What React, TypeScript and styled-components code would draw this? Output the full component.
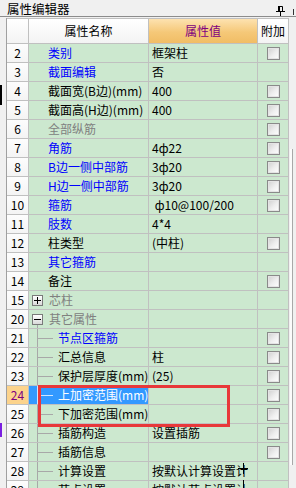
import * as React from "react";
import styled, { createGlobalStyle, css } from "styled-components";

const GlobalStyle = createGlobalStyle`
  html, body {
    margin: 0;
    padding: 0;
    background: #f0f0f0;
  }
  body {
    font-family: "Noto Sans CJK SC", "Liberation Sans", sans-serif;
    font-size: 12px;
    color: #000;
  }
  * {
    box-sizing: border-box;
  }
`;

type Tone = "blue" | "black" | "grey";
type Kind = "plain" | "collapsed" | "expanded" | "child";

interface IRow {
  n: number;
  name: string;
  value?: string;
  tone: Tone;
  kind: Kind;
  check: boolean;
  selected?: boolean;
}

const rows: IRow[] = [
  { n: 2, name: "类别", value: "框架柱", tone: "blue", kind: "plain", check: true },
  { n: 3, name: "截面编辑", value: "否", tone: "blue", kind: "plain", check: false },
  { n: 4, name: "截面宽(B边)(mm)", value: "400", tone: "black", kind: "plain", check: true },
  { n: 5, name: "截面高(H边)(mm)", value: "400", tone: "black", kind: "plain", check: true },
  { n: 6, name: "全部纵筋", tone: "grey", kind: "plain", check: true },
  { n: 7, name: "角筋", value: "4ф22", tone: "blue", kind: "plain", check: true },
  { n: 8, name: "B边一侧中部筋", value: "3ф20", tone: "blue", kind: "plain", check: true },
  { n: 9, name: "H边一侧中部筋", value: "3ф20", tone: "blue", kind: "plain", check: true },
  { n: 10, name: "箍筋", value: " ф10@100/200", tone: "blue", kind: "plain", check: true },
  { n: 11, name: "肢数", value: "4*4", tone: "blue", kind: "plain", check: false },
  { n: 12, name: "柱类型", value: "(中柱)", tone: "black", kind: "plain", check: true },
  { n: 13, name: "其它箍筋", tone: "blue", kind: "plain", check: false },
  { n: 14, name: "备注", tone: "black", kind: "plain", check: true },
  { n: 15, name: "芯柱", tone: "grey", kind: "collapsed", check: false },
  { n: 20, name: "其它属性", tone: "grey", kind: "expanded", check: false },
  { n: 21, name: "节点区箍筋", tone: "blue", kind: "child", check: true },
  { n: 22, name: "汇总信息", value: "柱", tone: "black", kind: "child", check: true },
  { n: 23, name: "保护层厚度(mm)", value: "(25)", tone: "black", kind: "child", check: true },
  { n: 24, name: "上加密范围(mm)", tone: "black", kind: "child", check: true, selected: true },
  { n: 25, name: "下加密范围(mm)", tone: "black", kind: "child", check: true },
  { n: 26, name: "插筋构造", value: "设置插筋", tone: "black", kind: "child", check: true },
  { n: 27, name: "插筋信息", tone: "black", kind: "child", check: true },
  { n: 28, name: "计算设置", value: "按默认计算设置计", tone: "black", kind: "child", check: false },
  { n: 29, name: "节点设置", value: "按默认节点设置计", tone: "black", kind: "child", check: false }
];

const toneColors: Record<Tone, string> = {
  blue: "#0000ff",
  black: "#000000",
  grey: "#808080"
};

const GRID = "#c0c0c0";
const GREEN = "#cce8cf";

const SPanel = styled.div`
  position: relative;
  width: 296px;
  height: 488px;
  overflow: hidden;
  background: #f0f0f0;
  display: flex;
  flex-direction: column;
`;

const STitleBar = styled.div`
  flex: none;
  height: 17px;
  padding: 2px 0 0 7px;
  border-bottom: 1px solid #8c8c8c;
  display: flex;
  align-items: center;
  font-size: 12.5px;
  line-height: 14px;
`;

const STitle = styled.span`
  flex: 1;
`;

const SPin = styled.svg`
  flex: none;
  margin-top: 3px;
  margin-right: 8px;
`;

const SEdgeGlyph = styled.span`
  flex: none;
  width: 1px;
  height: 6px;
  margin-top: 5px;
  margin-right: 2px;
  background: #333;
`;

const SBody = styled.div`
  flex: 1;
  display: flex;
  margin-top: 1px;
  min-height: 0;
`;

const SGutter = styled.div`
  flex: none;
  width: 7px;
  border-right: 1px solid #a0a0a0;
  display: flex;
  flex-direction: column;
`;

const SGutterMark = styled.span<{ $gap: number; $height: number; $color: string }>`
  width: 2px;
  margin-top: ${({ $gap }) => $gap}px;
  height: ${({ $height }) => $height}px;
  background: ${({ $color }) => $color};
`;

const STable = styled.div`
  flex: none;
  width: 282px;
  border-top: 1px solid ${GRID};
  display: flex;
  flex-direction: column;
`;

const SRow = styled.div<{ $header?: boolean }>`
  flex: none;
  display: grid;
  grid-template-columns: 22px 120px 109px 31px;
  height: ${({ $header }) => ($header ? 25 : 19)}px;
`;

const cellBase = css`
  border-right: 1px solid ${GRID};
  border-bottom: 1px solid ${GRID};
  display: flex;
  align-items: center;
  overflow: hidden;
  white-space: nowrap;
  line-height: 14px;
`;

const SHeadCell = styled.div<{ $accent?: boolean }>`
  ${cellBase};
  justify-content: center;
  color: ${({ $accent }) => ($accent ? "#800080" : "#000")};
  background: ${({ $accent }) =>
    $accent
      ? "linear-gradient(#fde2b0, #f5c878 55%, #f1bd65)"
      : "linear-gradient(#ffffff, #f3f3f3)"};
`;

const SNumCell = styled.div<{ $selected?: boolean }>`
  ${cellBase};
  justify-content: center;
  color: ${({ $selected }) => ($selected ? "#800080" : "#000")};
  background: ${({ $selected }) =>
    $selected ? "#fcd38c" : "linear-gradient(#fdfdfd, #f4f4f4)"};
`;

const SNameCell = styled.div<{ $tone: Tone; $selected?: boolean; $plain?: boolean }>`
  ${cellBase};
  align-items: stretch;
  padding-left: ${({ $plain }) => ($plain ? 19 : 0)}px;
  color: ${({ $tone, $selected }) => ($selected ? "#fff" : toneColors[$tone])};
  background: ${({ $selected }) => ($selected ? "#3399ff" : GREEN)};
`;

const SNameText = styled.span<{ $gap: number }>`
  display: flex;
  align-items: center;
  margin-left: ${({ $gap }) => $gap}px;
`;

const SExpanderWrap = styled.span<{ $open?: boolean }>`
  flex: none;
  width: 11px;
  margin-left: 3px;
  display: flex;
  align-items: center;
  background: ${({ $open }) =>
    $open ? "linear-gradient(#a8a8a8, #a8a8a8) no-repeat 5px 100% / 1px 50%" : "none"};
`;

const SExpander = styled.span<{ $open?: boolean }>`
  position: relative;
  width: 11px;
  height: 11px;
  border: 1px solid #7a7a7a;
  background: linear-gradient(#ffffff, #d9d9d9);

  &::before {
    content: "";
    position: absolute;
    left: 1px;
    top: 4px;
    width: 7px;
    height: 1px;
    background: #000;
  }

  &::after {
    content: "";
    display: ${({ $open }) => ($open ? "none" : "block")};
    position: absolute;
    left: 4px;
    top: 1px;
    width: 1px;
    height: 7px;
    background: #000;
  }
`;

const SGuide = styled.span<{ $selected?: boolean }>`
  flex: none;
  width: 16px;
  margin-left: 8px;
  background:
    linear-gradient(${({ $selected }) => ($selected ? "#cfe6ff" : "#a8a8a8")}, ${({ $selected }) =>
      $selected ? "#cfe6ff" : "#a8a8a8"}) no-repeat 0 0 / 1px 100%,
    linear-gradient(${({ $selected }) => ($selected ? "#cfe6ff" : "#a8a8a8")}, ${({ $selected }) =>
      $selected ? "#cfe6ff" : "#a8a8a8"}) no-repeat 0 50% / 16px 1px;
`;

const SValueCell = styled.div`
  ${cellBase};
  padding-left: 3px;
  white-space: pre;
  background: ${GREEN};
`;

const SCheckCell = styled.div`
  ${cellBase};
  justify-content: center;
  padding-left: 1px;
  background: ${GREEN};
`;

const SCheck = styled.span`
  width: 13px;
  height: 13px;
  border: 1px solid #8a8a8a;
  box-shadow: inset 0 0 0 1px #e4e4e4;
  background: linear-gradient(135deg, #cfcfcf 0%, #efefef 55%, #ffffff 100%);
`;

const SRightStrip = styled.div`
  flex: 1;
  display: flex;
  flex-direction: column;
`;

const SScrollEdge = styled.span`
  width: 3px;
  height: 316px;
  margin: 131px 0 0 1px;
  background: #fbfbfb;
  border-right: 1px solid #a8a8a8;
`;

const SHighlight = styled.div`
  position: absolute;
  left: 38px;
  top: 385px;
  width: 192px;
  height: 42px;
  border: 3px solid #e8383a;
  pointer-events: none;
`;

const SCursor = styled.svg`
  position: absolute;
  left: 236px;
  top: 461px;
  pointer-events: none;
`;

const NameCell = ({ row }: { row: IRow }) => {
  if (row.kind === "plain") {
    return (
      <SNameCell $tone={row.tone} $plain>
        <SNameText $gap={0}>{row.name}</SNameText>
      </SNameCell>
    );
  }
  if (row.kind === "child") {
    return (
      <SNameCell $tone={row.tone} $selected={row.selected}>
        <SGuide $selected={row.selected} />
        <SNameText $gap={5}>{row.name}</SNameText>
      </SNameCell>
    );
  }
  const open = row.kind === "expanded";
  return (
    <SNameCell $tone={row.tone}>
      <SExpanderWrap $open={open}>
        <SExpander $open={open} />
      </SExpanderWrap>
      <SNameText $gap={6}>{row.name}</SNameText>
    </SNameCell>
  );
};

const App = () => (
  <SPanel>
    <GlobalStyle />
    <STitleBar>
      <STitle>{`属性编辑器`}</STitle>
      <SPin width="9" height="10" viewBox="0 0 9 10">
        <path d="M2.5 0.5h4v5h-4z" fill="none" stroke="#000" />
        <path d="M2 0h2v6H2z" fill="#000" />
        <path d="M0 5.5h9" stroke="#000" />
        <path d="M4.5 6v4" stroke="#000" />
      </SPin>
      <SEdgeGlyph />
    </STitleBar>
    <SBody>
      <SGutter>
        <SGutterMark $gap={67} $height={20} $color="#000" />
        <SGutterMark $gap={318} $height={14} $color="#7a1fe0" />
      </SGutter>
      <STable>
        <SRow $header>
          <SHeadCell />
          <SHeadCell>{`属性名称`}</SHeadCell>
          <SHeadCell $accent>{`属性值`}</SHeadCell>
          <SHeadCell>{`附加`}</SHeadCell>
        </SRow>
        {rows.map(row => (
          <SRow key={row.n}>
            <SNumCell $selected={row.selected}>{row.n}</SNumCell>
            <NameCell row={row} />
            <SValueCell>{row.value || ""}</SValueCell>
            <SCheckCell>{row.check ? <SCheck /> : null}</SCheckCell>
          </SRow>
        ))}
      </STable>
      <SRightStrip>
        <SScrollEdge />
      </SRightStrip>
    </SBody>
    <SHighlight />
    <SCursor width="14" height="27" viewBox="0 0 14 27">
      <path d="M2 7.5h10M7.5 2v11M7.5 19v8" stroke="#000" strokeWidth="1" />
    </SCursor>
  </SPanel>
);

export default App;
